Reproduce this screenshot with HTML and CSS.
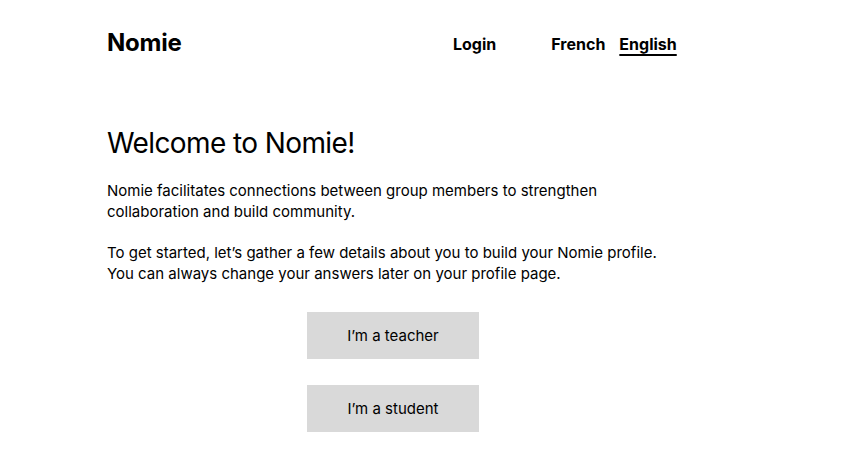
FILE: index.html
```html
<!DOCTYPE html>
<html>
<head>
<meta charset="utf-8">
<link rel="stylesheet" href="styles.css">
</head>
<body>
<header class="top">
  <div class="logo">Nomie</div>
  <nav class="nav">
    <a class="nav-link login" href="#">Login</a>
    <div class="langs">
      <a class="nav-link" href="#">French</a>
      <a class="nav-link active" href="#">English</a>
    </div>
  </nav>
</header>
<main class="main">
  <h1 class="title">Welcome to Nomie!</h1>
  <p class="text">Nomie facilitates connections between group members to strengthen<br>collaboration and build community.</p>
  <p class="text">To get started, let’s gather a few details about you to build your Nomie profile.<br>You can always change your answers later on your profile page.</p>
  <div class="actions">
    <button class="btn">I’m a teacher</button>
    <button class="btn">I’m a student</button>
  </div>
</main>
</body>
</html>
```
FILE: styles.css
```css
* { box-sizing: border-box; }
body {
  margin: 0;
  background: #fff;
  color: #000;
  font-family: Inter, "Noto Sans", sans-serif;
}
.top {
  display: flex;
  align-items: center;
  padding: 28px 0 0 107px;
  height: 60px;
}
.logo {
  font-size: 24px;
  font-weight: 700;
  letter-spacing: -0.2px;
  width: 346px;
  margin-top: -4px;
}
.nav {
  display: flex;
  align-items: center;
  font-size: 16px;
  font-weight: 700;
}
.nav-link {
  color: #000;
  text-decoration: none;
}
.login { margin-right: 55px; }
.langs { display: flex; gap: 14px; }
.active {
  text-decoration: underline;
  text-underline-offset: 4px;
  text-decoration-thickness: 1.5px;
}
.main {
  padding: 0 0 0 107px;
  margin-top: 66px;
}
.title {
  margin: 0 0 20px;
  font-size: 28px;
  font-weight: 400;
  letter-spacing: -0.6px;
  line-height: 34px;
}
.text {
  margin: 0 0 20px;
  font-size: 15px;
  line-height: 21px;
  letter-spacing: 0;
}
.actions {
  display: flex;
  flex-direction: column;
  gap: 26px;
  margin-left: 200px;
  margin-top: 28px;
}
.btn {
  width: 172px;
  height: 47px;
  border: none;
  background: #d9d9d9;
  font-family: inherit;
  font-size: 15px;
  color: #000;
  letter-spacing: 0;
}
```
